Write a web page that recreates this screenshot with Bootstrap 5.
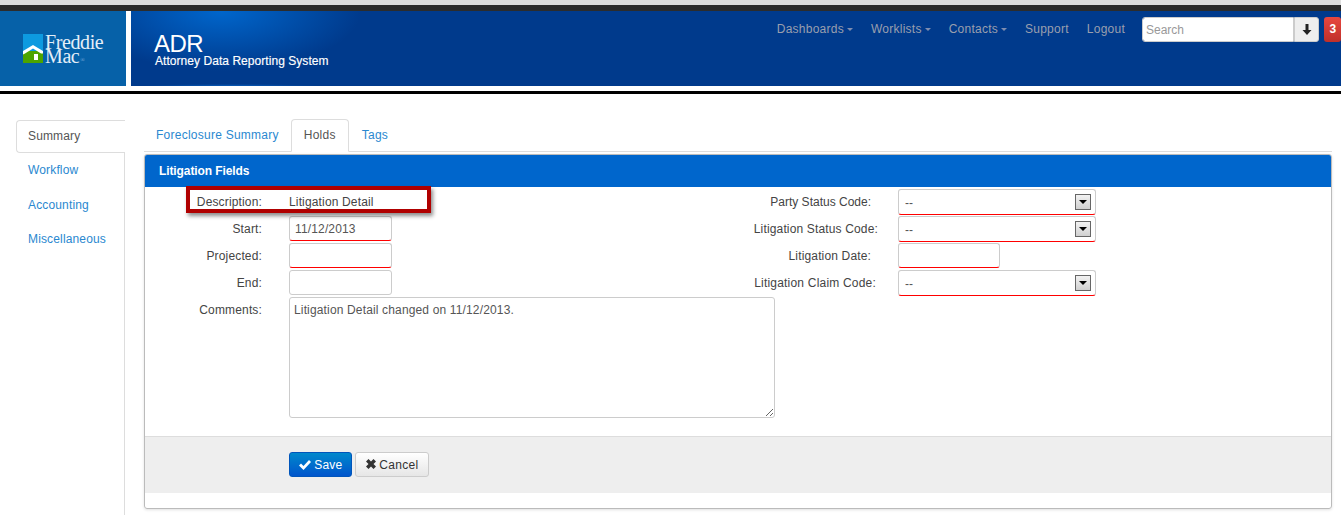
<!DOCTYPE html>
<html lang="en">
<head>
<meta charset="utf-8">
<title>ADR</title>
<link href="https://cdn.jsdelivr.net/npm/bootstrap@5.3.0/dist/css/bootstrap.min.css" rel="stylesheet">
<style>
html,body{height:515px;overflow:hidden}
body{font-family:"Liberation Sans",Arial,sans-serif;font-size:12px;color:#333;background:#fff;line-height:18px;letter-spacing:.15px}
.chrome-strip{height:5px;background:#dedede}
.chrome-dark{height:6px;background:#2c2c2c}
.app-head{height:75px;background:#fff;align-items:stretch}
.logo-cell{width:126px;background:#0661a8;margin-right:5px;padding:23px 0 0 23px;gap:2px}
.logo-house{flex:none}
.logo-words{font-family:"Liberation Serif",serif;font-size:20px;line-height:14px;color:#e4eef8;letter-spacing:-.4px;padding-top:1px;white-space:nowrap}
.logo-reg{font-size:6px;vertical-align:1px;color:#7fb0dc;letter-spacing:0;margin-left:1px}
.brand-cell{flex:1;background:radial-gradient(ellipse 90px 2px at 100px 100%,#0a5cb8 0,rgba(10,92,184,0) 100%),radial-gradient(ellipse 140px 60px at 90px 0,#0066cc 0,rgba(0,102,204,0) 100%),#003a8c;color:#fff;justify-content:space-between;align-items:flex-start}
.brand-text{padding:22px 0 0 23px}
.brand-name{font-size:24px;line-height:22px;letter-spacing:-.5px}
.brand-sub{font-size:12px;line-height:12px;margin:0 0 0 1px;-webkit-text-stroke:.15px #fff;letter-spacing:.05px}
.head-nav{margin-top:6px;gap:18px;height:25px}
.head-nav a{color:#9a9fae;text-decoration:none;line-height:12px;white-space:nowrap;letter-spacing:.25px;padding-bottom:2px}
.caretmark{display:inline-block;width:0;height:0;border:3px solid transparent;border-top-color:#7f8db0;border-bottom:0;vertical-align:middle;margin-left:3px}
.search-group{margin-left:-1px;width:199px;height:25px}
.search-group input{flex:none;width:152px;height:25px;border:1px solid #ccc;border-radius:3px 0 0 3px;padding:0 3px;font-size:12px;line-height:23px;box-shadow:none}
.search-group input::placeholder{color:#999}
.search-btn{flex:none;width:25px;height:25px;background:#eee;border:1px solid #ccc;border-left-width:1px;border-radius:0 3px 3px 0;padding:0}
.alert-count{flex:none;width:17px;height:25px;margin-left:5px;background:linear-gradient(#e8473f,#bf302a);color:#fff;font-weight:700;font-size:12px;border-radius:3px;text-align:center;line-height:25px;padding-left:1px}
.head-rule{height:8px;border-bottom:3px solid #000;margin-bottom:25px;background:#fff}
.side-col{width:109px;margin-left:16px;height:395px;margin-top:1px}
.side-nav{height:100%}
.side-nav .nav-link{height:34.5px;padding:8px 0 0 12px;color:#2a88d0;font-size:12px;border-right:1px solid #ddd;line-height:18px}
.side-nav .nav-link.active{height:33px;color:#555;border:1px solid #ddd;border-right:0;border-radius:4px 0 0 4px;padding:6px 0 0 11px}
.side-fill{border-right:1px solid #ddd}
.main-col{width:1188px;margin-left:19px}
.page-tabs{border-bottom:1px solid #ddd;height:33px;margin-bottom:2px;letter-spacing:.25px}
.page-tabs .nav-link{padding:6px 11px;height:33px;color:#2a88d0;font-size:12px;line-height:18px;border:1px solid transparent;margin-right:1px;border-radius:4px 4px 0 0}
.page-tabs .nav-item:first-child .nav-link{margin-right:0}
.page-tabs .nav-link.active{color:#555;border-color:#ddd #ddd #fff;background:#fff;padding:6px 12px}
.lit-panel{height:355px;border:1px solid #bbb;border-radius:3px;box-shadow:0 1px 3px rgba(0,0,0,.12)}
.lit-title{height:32px;background:#0066cc;color:#fff;font-weight:700;padding:7px 14px;border-radius:2px 2px 0 0;line-height:18px;letter-spacing:-.1px}
.lit-body{height:249px;padding-top:2px}
.left-form{width:589px;flex:none}
.field-row{height:27px;align-items:flex-start}
.field-label{width:117px;text-align:right;padding-top:4px;color:#444;margin-right:27px;flex:none}
.field-input{height:25px;border:1px solid #ccc;border-radius:3px;padding:0 5px;font-size:12px;color:#555;width:103px;background:#fff;box-shadow:none;flex:none;letter-spacing:.15px}
.need-mark{border-bottom-color:#f00}
.desc-text{padding-top:4px;color:#444;white-space:nowrap}
.notes-box{flex:none;width:486px;height:121px;border:1px solid #ccc;border-radius:3px;padding:3px 4px;font-size:12px;line-height:18px;color:#555;display:block;letter-spacing:.15px}
.rlabel{width:144px;text-align:right;padding-top:4px;color:#444;margin-right:20px;flex:none;white-space:nowrap}
.rlabel-in{padding-right:7px}
.rlabel-party{letter-spacing:0}
.rlabel-claim{padding-right:2px;letter-spacing:.2px}
.sel-wrap{width:198px;height:26px;position:relative}
.sel-wrap select{width:198px;height:26px;border:1px solid #ccc;border-bottom-color:#f00;border-radius:3px;padding:1px 6px 0;font-size:12px;color:#555;background:#fff;appearance:none;font-family:inherit}
.sel-arrow{position:absolute;right:5px;top:5px;width:16px;height:16px;border:1px solid #666;background:linear-gradient(#f2f2f2,#d0d0d0);pointer-events:none}
.sel-arrow::after{content:"";position:absolute;left:3px;top:5px;border:4px solid transparent;border-top-color:#000;border-bottom:0}
.date-short{width:102px}
.lit-foot{height:57px;background:#eee;border-top:1px solid #ddd;padding:15px 0 0 144px;gap:3px}
.btn-save,.btn-cancel{height:25px;font-size:12px;padding:1px 0 0;line-height:22px;border-radius:3px;letter-spacing:.15px}
.btn-save{width:63px;background:linear-gradient(#0088cc,#0055cc);border:1px solid #0055bb;color:#fff}
.btn-cancel{width:74px;background:linear-gradient(#fff,#e6e6e6);border:1px solid #ccc;color:#333;letter-spacing:.3px}
.mark-box{position:absolute;left:41px;top:-3px;width:245px;height:27px;border:4px solid #b00000;box-shadow:2px 3px 4px rgba(0,0,0,.45);pointer-events:none}
.ico{vertical-align:-1px}
.ico-up{vertical-align:0}
</style>
</head>
<body>
<div class="chrome-strip"></div>
<div class="chrome-dark"></div>
<header class="app-head d-flex">
  <div class="logo-cell d-flex align-items-start">
    <svg class="logo-house" width="20" height="29" viewBox="0 0 20 29" aria-hidden="true">
      <rect width="20" height="29" fill="#0d9ae0"/>
      <rect y="17" width="20" height="12" fill="#4da400"/>
      <path d="M0 17 L10 11 L20 17 V19.5 L18 19.5 L10 14.5 L2 19.5 L0 20.5Z" fill="#fff"/>
      <rect x="11" y="20" width="4" height="6" fill="#fff"/>
    </svg>
    <div class="logo-words">Freddie<br>Mac<span class="logo-reg">®</span></div>
  </div>
  <div class="brand-cell d-flex">
    <div class="brand-text">
      <div class="brand-name">ADR</div>
      <div class="brand-sub">Attorney Data Reporting System</div>
    </div>
    <div class="head-nav d-flex align-items-center">
      <a href="#">Dashboards<span class="caretmark"></span></a>
      <a href="#">Worklists<span class="caretmark"></span></a>
      <a href="#">Contacts<span class="caretmark"></span></a>
      <a href="#">Support</a>
      <a href="#">Logout</a>
      <div class="search-group d-flex">
        <input type="text" class="form-control" placeholder="Search">
        <button type="button" class="search-btn btn d-flex align-items-center justify-content-center" aria-label="Download">
          <svg width="10" height="12" viewBox="0 0 10 12"><path d="M3.5 0H6.5V6H9.5L5 11L.5 6H3.5Z" fill="#222"/></svg>
        </button>
        <div class="alert-count">3</div>
      </div>
    </div>
  </div>
</header>
<div class="head-rule"></div>
<div class="d-flex">
  <nav class="side-col">
    <div class="nav flex-column flex-nowrap side-nav">
      <a class="nav-link active" href="#">Summary</a>
      <a class="nav-link" href="#">Workflow</a>
      <a class="nav-link" href="#">Accounting</a>
      <a class="nav-link" href="#">Miscellaneous</a>
      <div class="flex-grow-1 side-fill"></div>
    </div>
  </nav>
  <main class="main-col">
    <ul class="nav nav-tabs page-tabs">
      <li class="nav-item"><a class="nav-link" href="#">Foreclosure Summary</a></li>
      <li class="nav-item"><a class="nav-link active" href="#">Holds</a></li>
      <li class="nav-item"><a class="nav-link" href="#">Tags</a></li>
    </ul>
    <section class="lit-panel">
      <div class="lit-title">Litigation Fields</div>
      <div class="lit-body d-flex">
        <div class="left-form position-relative">
          <div class="mark-box"></div>
          <div class="field-row d-flex"><div class="field-label">Description:</div><div class="desc-text">Litigation Detail</div></div>
          <div class="field-row d-flex"><div class="field-label">Start:</div><input class="field-input need-mark" value="11/12/2013"></div>
          <div class="field-row d-flex"><div class="field-label">Projected:</div><input class="field-input need-mark"></div>
          <div class="field-row d-flex"><div class="field-label">End:</div><input class="field-input"></div>
          <div class="d-flex"><div class="field-label">Comments:</div><textarea class="notes-box">Litigation Detail changed on 11/12/2013.</textarea></div>
        </div>
        <div class="right-form">
          <div class="field-row d-flex"><div class="rlabel rlabel-in rlabel-party">Party Status Code:</div><div class="sel-wrap"><select><option>--</option></select><span class="sel-arrow"></span></div></div>
          <div class="field-row d-flex"><div class="rlabel">Litigation Status Code:</div><div class="sel-wrap"><select><option>--</option></select><span class="sel-arrow"></span></div></div>
          <div class="field-row d-flex"><div class="rlabel rlabel-in">Litigation Date:</div><input class="field-input need-mark date-short"></div>
          <div class="field-row d-flex"><div class="rlabel rlabel-claim">Litigation Claim Code:</div><div class="sel-wrap"><select><option>--</option></select><span class="sel-arrow"></span></div></div>
        </div>
      </div>
      <div class="lit-foot d-flex align-items-start">
        <button type="button" class="btn btn-save"><svg class="ico" width="12" height="10" viewBox="0 0 12 10"><path d="M0 5.5L2 3.5L4.5 6L10 0L12 2L4.5 10Z" fill="#fff"/></svg> Save</button>
        <button type="button" class="btn btn-cancel"><svg class="ico ico-up" width="10" height="10" viewBox="0 0 10 10"><path d="M0 2.5L2.5 0L5 2.5L7.5 0L10 2.5L7.5 5L10 7.5L7.5 10L5 7.5L2.5 10L0 7.5L2.5 5Z" fill="#333"/></svg> Cancel</button>
      </div>
    </section>
  </main>
</div>
<script src="https://cdn.jsdelivr.net/npm/bootstrap@5.3.0/dist/js/bootstrap.bundle.min.js"></script>
</body>
</html>
